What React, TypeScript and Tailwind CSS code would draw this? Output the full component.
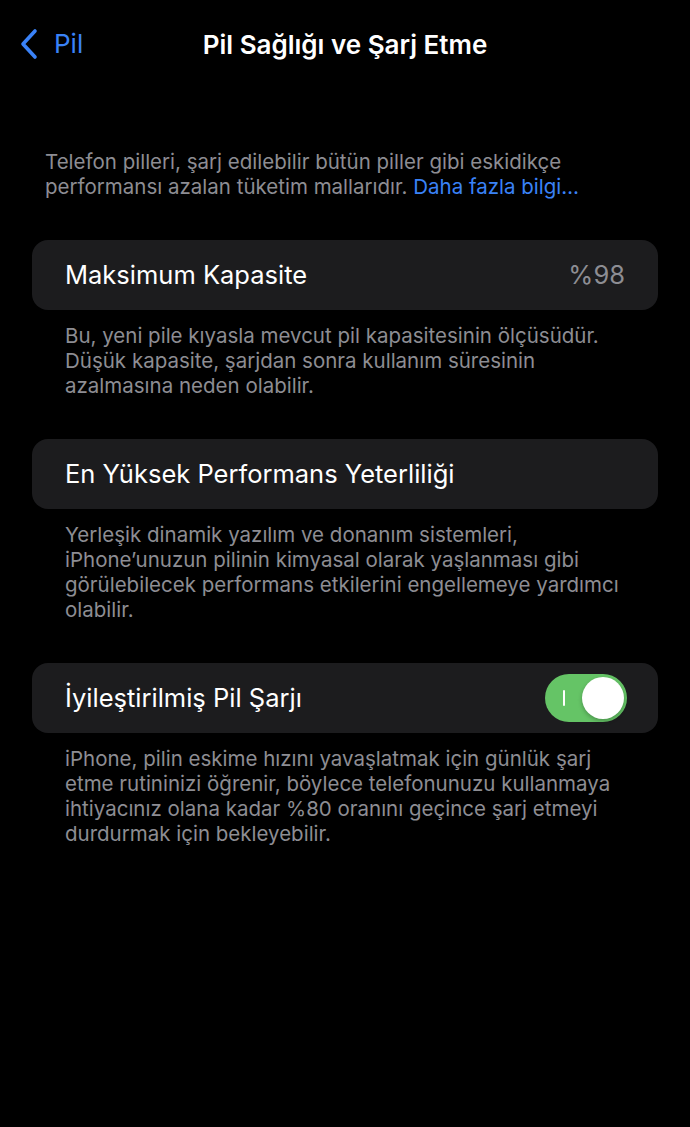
const Footnote = ({ children }: { children: React.ReactNode }) => (
  <p className="mt-[13px] px-[33px] text-[20.5px] leading-[25px] text-[#8d8d93]">{children}</p>
);

const Card = ({ children }: { children: React.ReactNode }) => (
  <div className="h-[70px] rounded-[16px] bg-[#1c1c1e] px-[33px] flex items-center justify-between">{children}</div>
);

export default function App() {
  return (
    <div className="min-h-[1127px] w-[690px] bg-black text-white" style={{ fontFamily: 'Inter, "Noto Sans", sans-serif' }}>
      <div className="relative h-[88px] flex items-center justify-center">
        <div className="absolute left-[18px] top-[28px] flex items-center gap-[14px] text-[#3a82f7]">
          <svg width="22" height="32" viewBox="0 0 22 32" fill="none" stroke="currentColor" strokeWidth="3.6" strokeLinecap="round" strokeLinejoin="round">
            <path d="M17 3 L5 16 L17 29" />
          </svg>
          <span className="text-[26px] leading-[32px]">Pil</span>
        </div>
        <h1 className="text-[26px] font-semibold">Pil Sağlığı ve Şarj Etme</h1>
      </div>

      <div className="px-[32px]">
        <p className="mt-[61px] px-[13px] text-[20.5px] leading-[25px] text-[#8d8d93]">
          Telefon pilleri, şarj edilebilir bütün piller gibi eskidikçe performansı azalan tüketim mallarıdır.{' '}
          <span className="text-[#3a82f7]">Daha fazla bilgi…</span>
        </p>

        <div className="mt-[41px]">
          <Card>
            <span className="text-[25.5px] pt-[1px]">Maksimum Kapasite</span>
            <span className="text-[25.5px] pt-[1px] text-[#8d8d93]">%98</span>
          </Card>
          <Footnote>
            Bu, yeni pile kıyasla mevcut pil kapasitesinin ölçüsüdür. Düşük kapasite, şarjdan sonra kullanım süresinin azalmasına neden olabilir.
          </Footnote>
        </div>

        <div className="mt-[41px]">
          <Card>
            <span className="text-[25.5px] pt-[1px]">En Yüksek Performans Yeterliliği</span>
          </Card>
          <Footnote>
            Yerleşik dinamik yazılım ve donanım sistemleri, iPhone’unuzun pilinin kimyasal olarak yaşlanması gibi görülebilecek performans etkilerini engellemeye yardımcı olabilir.
          </Footnote>
        </div>

        <div className="mt-[41px]">
          <div className="h-[70px] rounded-[16px] bg-[#1c1c1e] pl-[33px] pr-[31px] flex items-center justify-between">
            <span className="text-[25.5px] pt-[1px]">İyileştirilmiş Pil Şarjı</span>
            <div className="relative w-[82px] h-[48px] rounded-full bg-[#65c466]">
              <div className="absolute left-[18px] top-[16px] w-[2px] h-[16px] bg-white rounded-full" />
              <div className="absolute right-[3px] top-[3px] w-[42px] h-[42px] rounded-full bg-white shadow-[0_2px_4px_rgba(0,0,0,0.25)]" />
            </div>
          </div>
          <Footnote>
            iPhone, pilin eskime hızını yavaşlatmak için günlük şarj etme rutininizi öğrenir, böylece telefonunuzu kullanmaya ihtiyacınız olana kadar %80 oranını geçince şarj etmeyi durdurmak için bekleyebilir.
          </Footnote>
        </div>
      </div>
    </div>
  );
}
